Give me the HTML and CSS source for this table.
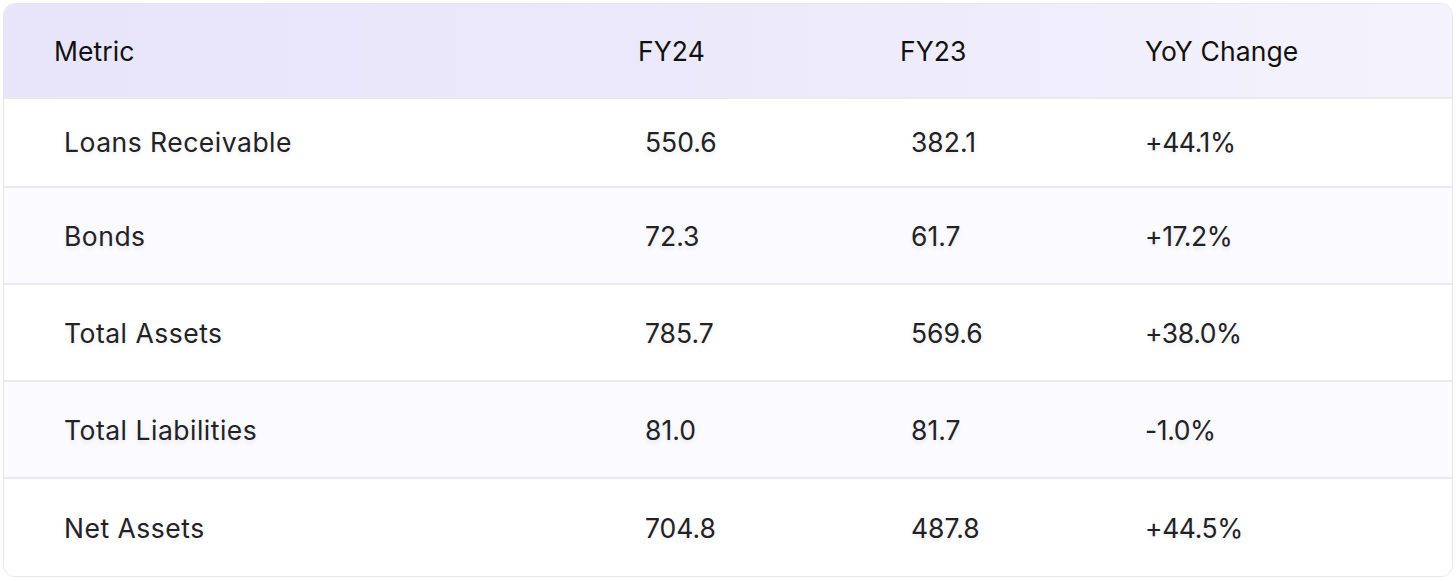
FILE: index.html
```html
<!DOCTYPE html>
<html lang="en">
<head>
<meta charset="utf-8">
<title>Balance Sheet Metrics</title>
<link rel="stylesheet" href="styles.css">
</head>
<body>
<div class="table">
  <div class="row head">
    <div class="cell c1">Metric</div>
    <div class="cell c2">FY24</div>
    <div class="cell c3">FY23</div>
    <div class="cell c4">YoY Change</div>
  </div>
  <div class="row body first">
    <div class="cell c1">Loans Receivable</div>
    <div class="cell c2">550.6</div>
    <div class="cell c3">382.1</div>
    <div class="cell c4">+44.1%</div>
  </div>
  <div class="row body alt">
    <div class="cell c1">Bonds</div>
    <div class="cell c2">72.3</div>
    <div class="cell c3">61.7</div>
    <div class="cell c4">+17.2%</div>
  </div>
  <div class="row body">
    <div class="cell c1">Total Assets</div>
    <div class="cell c2">785.7</div>
    <div class="cell c3">569.6</div>
    <div class="cell c4">+38.0%</div>
  </div>
  <div class="row body alt">
    <div class="cell c1">Total Liabilities</div>
    <div class="cell c2">81.0</div>
    <div class="cell c3">81.7</div>
    <div class="cell c4">-1.0%</div>
  </div>
  <div class="row body last">
    <div class="cell c1">Net Assets</div>
    <div class="cell c2">704.8</div>
    <div class="cell c3">487.8</div>
    <div class="cell c4">+44.5%</div>
  </div>
</div>
</body>
</html>
```

FILE: styles.css
```css
html, body {
  margin: 0;
  padding: 0;
  background: #ffffff;
}
body {
  padding: 3px 3px 0 3px;
  font-family: Inter, "Noto Sans", "Liberation Sans", sans-serif;
}
.table {
  width: 1450px;
  border: 1px solid #e6e6ec;
  border-radius: 12px;
  overflow: hidden;
  box-sizing: border-box;
}
.row {
  display: grid;
  grid-template-columns: 584px 262px 245px 1fr;
  align-items: center;
}
.head {
  height: 93px;
  background: linear-gradient(90deg, #e8e5fb 0%, #ebe8fb 45%, #f4f3fc 100%);
  color: #111111;
  font-size: 26.5px;
  font-weight: 400;
  letter-spacing: 0.1px;
}
.head .c1 { padding-left: 50px; }
.head .c2 { padding-left: 50px; }
.head .c3 { padding-left: 50px; }
.head .c4 { padding-left: 50px; }
.body {
  height: 97px;
  padding-bottom: 0;
  background: #ffffff;
  border-top: 2px solid #e9e9ee;
  box-sizing: border-box;
  color: #222226;
  font-size: 26.5px;
  font-weight: 400;
  text-shadow: 0 3px 4px rgba(0, 0, 0, 0.08);
}
.body .c1 { padding-left: 60px; letter-spacing: 0.5px; }
.body .c2 { padding-left: 57px; }
.body .c3 { padding-left: 61px; }
.body .c4 { padding-left: 50px; letter-spacing: -0.4px; }
.alt { background: #fafaff; }
.first { height: 89px; padding-bottom: 2px; }
.last { height: 99px; }
```
